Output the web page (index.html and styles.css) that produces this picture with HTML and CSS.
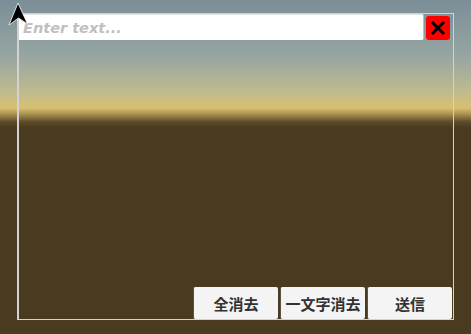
FILE: index.html
```html
<!DOCTYPE html>
<html lang="ja">
<head>
    <meta charset="UTF-8">
    <meta name="viewport" content="width=device-width, initial-scale=1.0">
    <title>テキスト入力</title>
    <link rel="stylesheet" href="styles.css">
</head>
<body>
    <div class="panel">
        <div class="top-row">
            <input type="text" class="text-input" placeholder="Enter text...">
            <button class="close-btn" aria-label="閉じる">
                <svg width="18" height="18" viewBox="0 0 18 18">
                    <path d="M3 3 L15 15 M15 3 L3 15" stroke="#000" stroke-width="3"/>
                </svg>
            </button>
        </div>

        <div class="button-row">
            <button class="key-btn">全消去</button>
            <button class="key-btn">一文字消去</button>
            <button class="key-btn">送信</button>
        </div>
    </div>

    <!-- マウスカーソル -->
    <svg class="cursor" width="22" height="26" viewBox="0 0 22 26">
        <polygon points="10,1 19.5,22 10.5,16 1,23" fill="#000" stroke="#fff" stroke-width="0.8"/>
    </svg>
</body>
</html>
```

FILE: styles.css
```css
html, body {
    height: 100%;
}

body {
    margin: 0;
    padding: 13px 0 0 17px;
    box-sizing: border-box;
    overflow: hidden;
    background: linear-gradient(to bottom,
        #7b8e97 0px,
        #95a5a2 55px,
        #bfbb8e 92px,
        #d9c072 108px,
        #a08a4c 115px,
        #5c4a2a 122px,
        #4a3a1f 128px,
        #4a3a1f 100%);
    font-family: "Noto Sans CJK JP", "Noto Sans", sans-serif;
}

.panel {
    width: 437px;
    height: 307px;
    box-sizing: border-box;
    border: 1px solid #d2d2d2;
    border-left-width: 2px;
    display: flex;
    flex-direction: column;
    justify-content: space-between;
}

.top-row {
    display: flex;
    align-items: flex-end;
}

.text-input {
    width: 405px;
    height: 26px;
    box-sizing: border-box;
    margin: 0;
    padding: 0 4px;
    border: none;
    border-top: 1px solid #e2e2e2;
    border-right: 1px solid #bdbdbd;
    border-radius: 0 2px 2px 0;
    background: #fff;
    font-family: "DejaVu Sans", sans-serif;
    font-size: 14.5px;
    font-weight: bold;
    font-style: italic;
    color: #333;
}

.text-input::placeholder {
    color: #c0c0c0;
}

.close-btn {
    appearance: none;
    width: 24px;
    height: 24px;
    margin: 0 0 0 2px;
    padding: 0;
    border: 0;
    outline: 0;
    border-radius: 3px;
    background: #ff0000;
    display: flex;
    align-items: center;
    justify-content: center;
}

.button-row {
    display: flex;
    justify-content: flex-end;
    gap: 2px;
    padding-right: 1px;
}

.key-btn {
    width: 85px;
    height: 32px;
    padding: 0;
    border: none;
    border-left: 1px solid #5b5246;
    border-radius: 2px;
    background: #f4f4f4;
    color: #323232;
    font-family: "Noto Sans CJK JP", sans-serif;
    font-size: 15px;
    font-weight: bold;
}

.cursor {
    position: absolute;
    left: 8px;
    top: 2px;
}
```
